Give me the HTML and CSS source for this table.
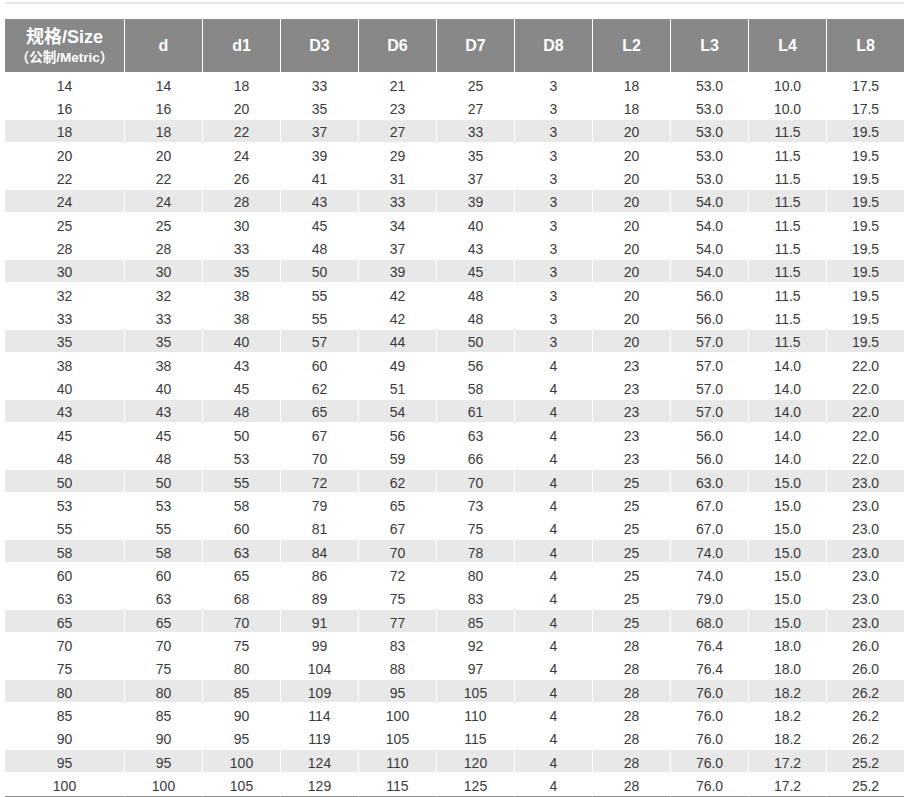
FILE: index.html
```html
<!DOCTYPE html>
<html lang="zh">
<head>
<meta charset="utf-8">
<title>规格表</title>
<link rel="stylesheet" href="styles.css">
</head>
<body>
<div class="page">
  <div class="rule"></div>
  <table class="spec">
    <colgroup>
      <col class="c-size"><col class="c"><col class="c"><col class="c"><col class="c"><col class="c"><col class="c"><col class="c"><col class="c"><col class="c"><col class="c">
    </colgroup>
    <thead>
      <tr>
        <th class="first"><span class="t1">规格/Size</span><span class="t2">（公制/Metric）</span></th>
        <th>d</th><th>d1</th><th>D3</th><th>D6</th><th>D7</th><th>D8</th><th>L2</th><th>L3</th><th>L4</th><th>L8</th>
      </tr>
    </thead>
    <tbody>
      <tr><td>14</td><td>14</td><td>18</td><td>33</td><td>21</td><td>25</td><td>3</td><td>18</td><td>53.0</td><td>10.0</td><td>17.5</td></tr>
      <tr><td>16</td><td>16</td><td>20</td><td>35</td><td>23</td><td>27</td><td>3</td><td>18</td><td>53.0</td><td>10.0</td><td>17.5</td></tr>
      <tr class="alt"><td>18</td><td>18</td><td>22</td><td>37</td><td>27</td><td>33</td><td>3</td><td>20</td><td>53.0</td><td>11.5</td><td>19.5</td></tr>
      <tr><td>20</td><td>20</td><td>24</td><td>39</td><td>29</td><td>35</td><td>3</td><td>20</td><td>53.0</td><td>11.5</td><td>19.5</td></tr>
      <tr><td>22</td><td>22</td><td>26</td><td>41</td><td>31</td><td>37</td><td>3</td><td>20</td><td>53.0</td><td>11.5</td><td>19.5</td></tr>
      <tr class="alt"><td>24</td><td>24</td><td>28</td><td>43</td><td>33</td><td>39</td><td>3</td><td>20</td><td>54.0</td><td>11.5</td><td>19.5</td></tr>
      <tr><td>25</td><td>25</td><td>30</td><td>45</td><td>34</td><td>40</td><td>3</td><td>20</td><td>54.0</td><td>11.5</td><td>19.5</td></tr>
      <tr><td>28</td><td>28</td><td>33</td><td>48</td><td>37</td><td>43</td><td>3</td><td>20</td><td>54.0</td><td>11.5</td><td>19.5</td></tr>
      <tr class="alt"><td>30</td><td>30</td><td>35</td><td>50</td><td>39</td><td>45</td><td>3</td><td>20</td><td>54.0</td><td>11.5</td><td>19.5</td></tr>
      <tr><td>32</td><td>32</td><td>38</td><td>55</td><td>42</td><td>48</td><td>3</td><td>20</td><td>56.0</td><td>11.5</td><td>19.5</td></tr>
      <tr><td>33</td><td>33</td><td>38</td><td>55</td><td>42</td><td>48</td><td>3</td><td>20</td><td>56.0</td><td>11.5</td><td>19.5</td></tr>
      <tr class="alt"><td>35</td><td>35</td><td>40</td><td>57</td><td>44</td><td>50</td><td>3</td><td>20</td><td>57.0</td><td>11.5</td><td>19.5</td></tr>
      <tr><td>38</td><td>38</td><td>43</td><td>60</td><td>49</td><td>56</td><td>4</td><td>23</td><td>57.0</td><td>14.0</td><td>22.0</td></tr>
      <tr><td>40</td><td>40</td><td>45</td><td>62</td><td>51</td><td>58</td><td>4</td><td>23</td><td>57.0</td><td>14.0</td><td>22.0</td></tr>
      <tr class="alt"><td>43</td><td>43</td><td>48</td><td>65</td><td>54</td><td>61</td><td>4</td><td>23</td><td>57.0</td><td>14.0</td><td>22.0</td></tr>
      <tr><td>45</td><td>45</td><td>50</td><td>67</td><td>56</td><td>63</td><td>4</td><td>23</td><td>56.0</td><td>14.0</td><td>22.0</td></tr>
      <tr><td>48</td><td>48</td><td>53</td><td>70</td><td>59</td><td>66</td><td>4</td><td>23</td><td>56.0</td><td>14.0</td><td>22.0</td></tr>
      <tr class="alt"><td>50</td><td>50</td><td>55</td><td>72</td><td>62</td><td>70</td><td>4</td><td>25</td><td>63.0</td><td>15.0</td><td>23.0</td></tr>
      <tr><td>53</td><td>53</td><td>58</td><td>79</td><td>65</td><td>73</td><td>4</td><td>25</td><td>67.0</td><td>15.0</td><td>23.0</td></tr>
      <tr><td>55</td><td>55</td><td>60</td><td>81</td><td>67</td><td>75</td><td>4</td><td>25</td><td>67.0</td><td>15.0</td><td>23.0</td></tr>
      <tr class="alt"><td>58</td><td>58</td><td>63</td><td>84</td><td>70</td><td>78</td><td>4</td><td>25</td><td>74.0</td><td>15.0</td><td>23.0</td></tr>
      <tr><td>60</td><td>60</td><td>65</td><td>86</td><td>72</td><td>80</td><td>4</td><td>25</td><td>74.0</td><td>15.0</td><td>23.0</td></tr>
      <tr><td>63</td><td>63</td><td>68</td><td>89</td><td>75</td><td>83</td><td>4</td><td>25</td><td>79.0</td><td>15.0</td><td>23.0</td></tr>
      <tr class="alt"><td>65</td><td>65</td><td>70</td><td>91</td><td>77</td><td>85</td><td>4</td><td>25</td><td>68.0</td><td>15.0</td><td>23.0</td></tr>
      <tr><td>70</td><td>70</td><td>75</td><td>99</td><td>83</td><td>92</td><td>4</td><td>28</td><td>76.4</td><td>18.0</td><td>26.0</td></tr>
      <tr><td>75</td><td>75</td><td>80</td><td>104</td><td>88</td><td>97</td><td>4</td><td>28</td><td>76.4</td><td>18.0</td><td>26.0</td></tr>
      <tr class="alt"><td>80</td><td>80</td><td>85</td><td>109</td><td>95</td><td>105</td><td>4</td><td>28</td><td>76.0</td><td>18.2</td><td>26.2</td></tr>
      <tr><td>85</td><td>85</td><td>90</td><td>114</td><td>100</td><td>110</td><td>4</td><td>28</td><td>76.0</td><td>18.2</td><td>26.2</td></tr>
      <tr><td>90</td><td>90</td><td>95</td><td>119</td><td>105</td><td>115</td><td>4</td><td>28</td><td>76.0</td><td>18.2</td><td>26.2</td></tr>
      <tr class="alt"><td>95</td><td>95</td><td>100</td><td>124</td><td>110</td><td>120</td><td>4</td><td>28</td><td>76.0</td><td>17.2</td><td>25.2</td></tr>
      <tr class="last"><td>100</td><td>100</td><td>105</td><td>129</td><td>115</td><td>125</td><td>4</td><td>28</td><td>76.0</td><td>17.2</td><td>25.2</td></tr>
    </tbody>
  </table>
</div>
</body>
</html>
```

FILE: styles.css
```css
html, body {
  margin: 0;
  padding: 0;
  background: #ffffff;
}

body {
  font-family: "Liberation Sans", Arial, "Noto Sans CJK SC", sans-serif;
  color: #3a3a3a;
}

.page {
  padding: 2px 0 0 5px;
}

.rule {
  width: 899px;
  height: 2px;
  background: #e5e8ee;
}

.spec {
  margin-top: 15px;
  width: 899px;
  table-layout: fixed;
  border-collapse: separate;
  border-spacing: 0;
}

.c-size { width: 119px; }
.c { width: 78px; }

.spec th {
  height: 53px;
  padding: 0;
  background: #888888;
  color: #ffffff;
  font-weight: bold;
  font-size: 16px;
  text-align: center;
  vertical-align: middle;
  border-left: 1px solid #ffffff;
}

.spec th.first {
  border-left: 0;
  line-height: 1.2;
}

.t1 {
  display: block;
  font-size: 18px;
  margin-top: 2px;
}

.t2 {
  display: block;
  font-size: 13.5px;
  margin-top: 1px;
}

.spec td {
  height: 19.35px;
  padding: 3px 0 0;
  font-size: 14px;
  line-height: 16px;
  text-align: center;
  vertical-align: middle;
  border-top: 1px solid #ffffff;
  border-left: 1px solid #ffffff;
}

.spec td:first-child {
  border-left: 0;
}

.spec tr.alt td {
  background: #e8e8e9;
}

.spec tr.last td {
  border-bottom: 1px solid #8a8a8a;
}
```
